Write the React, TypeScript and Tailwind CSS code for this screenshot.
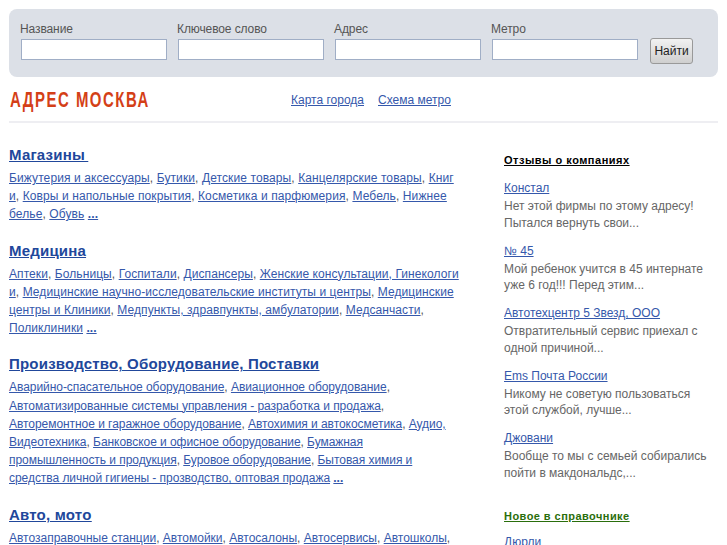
const sections = [
  {
    title: "Магазины\u2009",
    tracking: "tracking-[0.1px]",
    links: ["Бижутерия и аксессуары", "Бутики", "Детские товары", "Канцелярские товары", "Книг\u200Bи", "Ковры и напольные покрытия", "Косметика и парфюмерия", "Мебель", "Нижнее белье", "Обувь"],
  },
  {
    title: "Медицина",
    tracking: "tracking-[0.08px]",
    links: ["Аптеки", "Больницы", "Госпитали", "Диспансеры", "Женские консультации, Гинекологи\u200Bи", "Медицинские научно-исследовательские институты и центры", "Медицинские центры и Клиники", "Медпункты, здравпункты, амбулатории", "Медсанчасти", "Поликлиники"],
  },
  {
    title: "Производство, Оборудование, Поставки",
    tracking: "tracking-[-0.05px]",
    links: ["Аварийно-спасательное оборудование", "Авиационное оборудование", "Автоматизированные системы управления - разработка и продажа", "Авторемонтное и гаражное оборудование", "Автохимия и автокосметика", "Аудио, Видеотехника", "Банковское и офисное оборудование", "Бумажная\nпромышленность и продукция", "Буровое оборудование", "Бытовая химия и\nсредства личной гигиены - прозводство, оптовая продажа"],
  },
  {
    title: "Авто, мото",
    tracking: "tracking-normal",
    links: ["Автозаправочные станции", "Автомойки", "Автосалоны", "Автосервисы", "Автошколы", "Запчасти"],
  },
];

const reviews = [
  { name: "Констал", text: "Нет этой фирмы по этому адресу! Пытался вернуть свои..." },
  { name: "№ 45", text: "Мой ребенок учится в 45 интернате уже 6 год!!! Перед этим..." },
  { name: "Автотехцентр 5 Звезд, ООО", text: "Отвратительный сервис приехал с одной причиной..." },
  { name: "Ems Почта России", text: "Никому не советую пользоваться этой службой, лучше..." },
  { name: "Джовани", text: "Вообще то мы с семьей собирались пойти в макдональдс,..." },
];

const fields = ["Название", "Ключевое слово", "Адрес", "Метро"];

export default function App() {
  return (
    <div className="h-[545px] overflow-hidden bg-white px-[9px] pt-[9px] font-['Liberation_Sans',Arial,sans-serif] text-[12px] text-[#666]">
      <form className="flex h-[68px] items-start rounded-[8px] bg-[#dce0e7] pl-[11px] pt-[13px]">
        {fields.map((label) => (
          <label key={label} className="mr-[11px] block w-[146px]">
            <span className="block text-[12px] leading-[14px] tracking-[-0.1px] text-[#555]">{label}</span>
            <input type="text" className="mt-[3px] ml-px block h-[21px] w-[146px] border border-[#a0aec6] bg-white" />
          </label>
        ))}
        <button type="button" className="ml-[2px] mt-[16px] h-[26px] w-[43px] rounded-[3px] border border-[#999] bg-gradient-to-b from-[#f2f2f2] to-[#cfcfcf] text-[12px] text-[#222]">
          Найти
        </button>
      </form>

      <header className="flex h-[46px] items-center border-b-2 border-[#eeeef2] pt-[2px]">
        <div className="w-[282px]">
          <div className="ml-px w-[139px] origin-left scale-x-[0.68] whitespace-nowrap text-[22px] leading-none font-bold tracking-[2.2px] text-[#d43f17]">
            АДРЕС МОСКВА
          </div>
        </div>
        <nav className="flex gap-[14px] text-[#3558ab] underline">
          <a href="#">Карта города</a>
          <a href="#">Схема метро</a>
        </nav>
      </header>

      <div className="flex pt-[22px]">
        <main className="w-[451px] shrink-0">
          {sections.map((section) => (
            <section key={section.title} className="mb-[17px]">
              <h2 className="text-[15px] leading-[20px] font-bold tracking-[0.2px] text-[#21479b] underline">
                <a href="#">{section.title}</a>
              </h2>
              <p className={`mt-[4px] whitespace-pre-line leading-[18.2px] text-[#3558ab] ${section.tracking}`}>
                {section.links.map((link, index) => (
                  <span key={link}>
                    <a href="#" className="underline">{link}</a>
                    <span className="text-[#555]">{index < section.links.length - 1 ? ", " : " "}</span>
                  </span>
                ))}
                <a href="#" className="font-bold underline">...</a>
              </p>
            </section>
          ))}
        </main>

        <aside className="ml-[44px] w-[205px] shrink-0 pt-[8px]">
          <h3 className="text-[11px] leading-[14px] font-bold tracking-[0.5px] text-black underline">Отзывы о компаниях</h3>
          <ul className="mt-[12px]">
            {reviews.map((review) => (
              <li key={review.name} className="mb-[10.6px]">
                <a href="#" className="block leading-[19px] text-[#3558ab] underline">{review.name}</a>
                <p className="leading-[16.5px]">{review.text}</p>
              </li>
            ))}
          </ul>
          <h3 className="mt-[28px] text-[11px] leading-[14px] font-bold tracking-[0.45px] text-[#2a6e0c] underline">Новое в справочнике</h3>
          <a href="#" className="mt-[10px] block leading-[18px] text-[#3558ab] underline">Дюрли</a>
        </aside>
      </div>
    </div>
  );
}
